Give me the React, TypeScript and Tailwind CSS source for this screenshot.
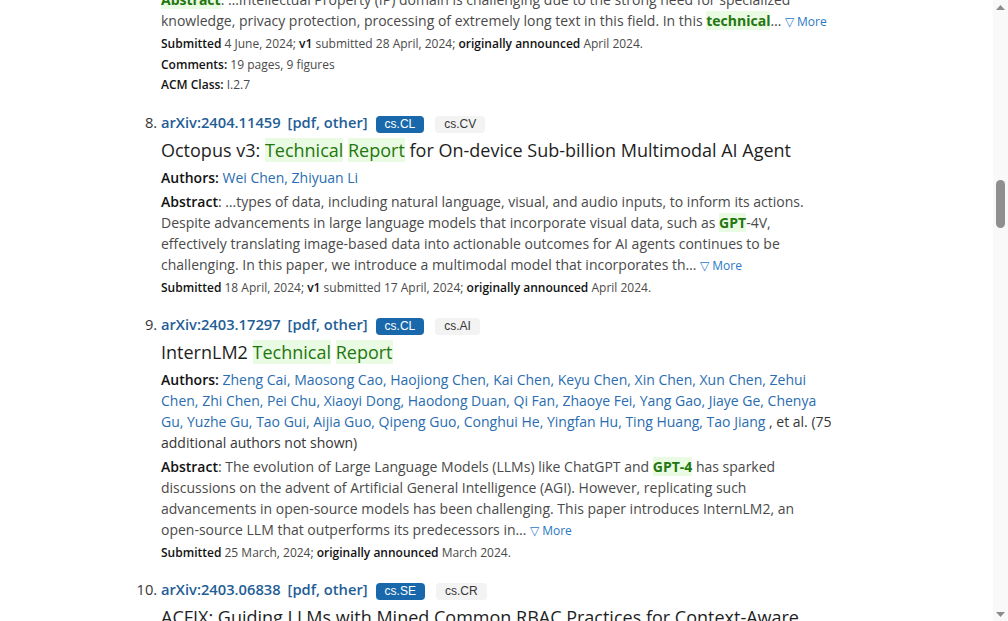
import { ReactNode } from 'react'

type Paper = {
  id: string
  tags: string[]
  title: ReactNode
  authors: string[]
  moreAuthors?: string
  abstract: ReactNode
  submitted: ReactNode
}

const Hit = ({ children, bold }: { children: ReactNode; bold?: boolean }) => (
  <span className={bold ? 'bg-[#e9fbe3] text-[#24760f] font-bold' : 'bg-[#e9fbe3] text-[#24760f]'}>
    {children}
  </span>
)

const Label = ({ children }: { children: ReactNode }) => (
  <span className="font-semibold text-[#121212]">{children}</span>
)

const More = () => (
  <a className="text-[12px] text-[#2a78c6] whitespace-nowrap">
    <span className="text-[12px]">▽</span> More
  </a>
)

const papers: Paper[] = [
  {
    id: '2404.11459',
    tags: ['cs.CL', 'cs.CV'],
    title: (
      <>
        Octopus v3: <Hit>Technical</Hit> <Hit>Report</Hit> for On-device Sub-billion Multimodal AI Agent
      </>
    ),
    authors: ['Wei Chen', 'Zhiyuan Li'],
    abstract: (
      <>
        …types of data, including natural language, visual, and audio inputs, to inform its actions. Despite
        advancements in large language models that incorporate visual data, such as <Hit bold>GPT</Hit>-4V,
        effectively translating image-based data into actionable outcomes for AI agents continues to be
        challenging. In this paper, we introduce a multimodal model that incorporates th…
      </>
    ),
    submitted: (
      <>
        <Label>Submitted</Label> 18 April, 2024; <Label>v1</Label> submitted 17 April, 2024;{' '}
        <Label>originally announced</Label> April 2024.
      </>
    ),
  },
  {
    id: '2403.17297',
    tags: ['cs.CL', 'cs.AI'],
    title: (
      <>
        InternLM2 <Hit>Technical</Hit> <Hit>Report</Hit>
      </>
    ),
    authors: [
      'Zheng Cai', 'Maosong Cao', 'Haojiong Chen', 'Kai Chen', 'Keyu Chen', 'Xin Chen', 'Xun Chen',
      'Zehui Chen', 'Zhi Chen', 'Pei Chu', 'Xiaoyi Dong', 'Haodong Duan', 'Qi Fan', 'Zhaoye Fei',
      'Yang Gao', 'Jiaye Ge', 'Chenya Gu', 'Yuzhe Gu', 'Tao Gui', 'Aijia Guo', 'Qipeng Guo',
      'Conghui He', 'Yingfan Hu', 'Ting Huang', 'Tao Jiang',
    ],
    moreAuthors: ' , et al. (75 additional authors not shown)',
    abstract: (
      <>
        The evolution of Large Language Models (LLMs) like ChatGPT and <Hit bold>GPT-4</Hit> has sparked
        discussions on the advent of Artificial General Intelligence (AGI). However, replicating such
        advancements in open-source models has been challenging. This paper introduces InternLM2, an
        open-source LLM that outperforms its predecessors in…
      </>
    ),
    submitted: (
      <>
        <Label>Submitted</Label> 25 March, 2024; <Label>originally announced</Label> March 2024.
      </>
    ),
  },
  {
    id: '2403.06838',
    tags: ['cs.SE', 'cs.CR'],
    title: 'ACFIX: Guiding LLMs with Mined Common RBAC Practices for Context-Aware Repair of Access Control Vulnerabilities in Smart Contracts',
    authors: ['Lyuye Zhang', 'Kaixuan Li', 'Kairan Sun', 'Daoyuan Wu', 'Ye Liu', 'Haoye Tian', 'Yang Liu'],
    abstract: <>Smart contracts are susceptible to various security issues…</>,
    submitted: (
      <>
        <Label>Submitted</Label> 11 March, 2024; <Label>originally announced</Label> March 2024.
      </>
    ),
  },
]

const Tag = ({ name, primary }: { name: string; primary: boolean }) => (
  <span
    className={
      primary
        ? "inline-flex items-center h-[17px] px-[9px] rounded-[4px] bg-[#1868ab] text-white text-[12px] font-['Liberation_Sans',sans-serif] align-[1px]"
        : "inline-flex items-center h-[17px] px-[9px] rounded-[4px] bg-[#f3f3f3] text-[#363636] text-[12px] font-['Liberation_Sans',sans-serif] align-[1px]"
    }
  >
    {name}
  </span>
)

const Result = ({ paper }: { paper: Paper }) => (
  <li className="mb-[14px] text-[14.7px] text-[#363636] marker:text-[#363636]">
    <p className="leading-[24px] font-semibold">
      <a className="text-[#1f5e96]">arXiv:{paper.id}</a>
      <span className="ml-[7px] text-[#1f5e96]">
        [<a>pdf</a>, <a>other</a>]
      </span>
      <span className="ml-[8px] inline-flex gap-[11px] font-normal">
        {paper.tags.map((t, i) => (
          <Tag key={t} name={t} primary={i === 0} />
        ))}
      </span>
    </p>
    <p className="mt-[3px] text-[18px] leading-[27px] text-[#1e1e1e]">{paper.title}</p>
    <p className="mt-[3px] text-[14px] leading-[21px]">
      <Label>Authors:</Label>{' '}
      {paper.authors.map((a, i) => (
        <span key={a} className="text-[#2a6db0]">
          <a>{a}</a>
          {i < paper.authors.length - 1 ? ', ' : ''}
        </span>
      ))}
      {paper.moreAuthors && <span className="text-[#363636]">{paper.moreAuthors}</span>}
    </p>
    <p className="mt-[3px] text-[14px] leading-[21px] text-[#4a4a4a]">
      <Label>Abstract</Label>: {paper.abstract} <More />
    </p>
    <p className="mt-[1px] text-[12px] leading-[21px] text-[#4a4a4a]">{paper.submitted}</p>
  </li>
)

const Scrollbar = () => (
  <div className="w-[15px] h-full shrink-0 bg-[#f9f9f9] flex flex-col items-center">
    <div className="h-[14px] w-full flex items-center justify-center">
      <svg width="9" height="5" viewBox="0 0 9 5">
        <path d="M4.5 0L9 5H0z" fill="#8c8c8c" />
      </svg>
    </div>
    <div className="flex-1 w-full flex flex-col items-center">
      <div className="mt-[166px] h-[48px] w-[9px] rounded-full bg-[#8f8f8f]" />
    </div>
    <div className="h-[14px] w-full flex items-center justify-center">
      <svg width="9" height="5" viewBox="0 0 9 5">
        <path d="M0 0H9L4.5 5z" fill="#8c8c8c" />
      </svg>
    </div>
  </div>
)

export default function App() {
  return (
    <div className="flex h-[621px] w-[1008px] overflow-hidden bg-white font-['Open_Sans',sans-serif]">
      <main className="flex-1 overflow-hidden">
        <div className="ml-[161px] w-[672px] -mt-[11px] mb-[15px]">
          <p className="text-[14px] leading-[21px] text-[#4a4a4a]">
            <Hit bold>Abstract</Hit>: …Intellectual Property (IP) domain is challenging due to the strong need
            for specialized knowledge, privacy protection, processing of extremely long text in this field. In
            this <Hit bold>technical</Hit>… <More />
          </p>
          <p className="mt-[1px] text-[12px] leading-[21px] text-[#4a4a4a]">
            <Label>Submitted</Label> 4 June, 2024; <Label>v1</Label> submitted 28 April, 2024;{' '}
            <Label>originally announced</Label> April 2024.
          </p>
          <p className="text-[12px] leading-[21px] text-[#4a4a4a]">
            <Label>Comments:</Label> 19 pages, 9 figures
          </p>
          <p className="text-[12px] leading-[20px] text-[#4a4a4a]">
            <Label>ACM Class:</Label> I.2.7
          </p>
        </div>
        <ol start={8} className="list-decimal ml-[161px] w-[672px]">
          {papers.map((p) => (
            <Result key={p.id} paper={p} />
          ))}
        </ol>
      </main>
      <Scrollbar />
    </div>
  )
}
